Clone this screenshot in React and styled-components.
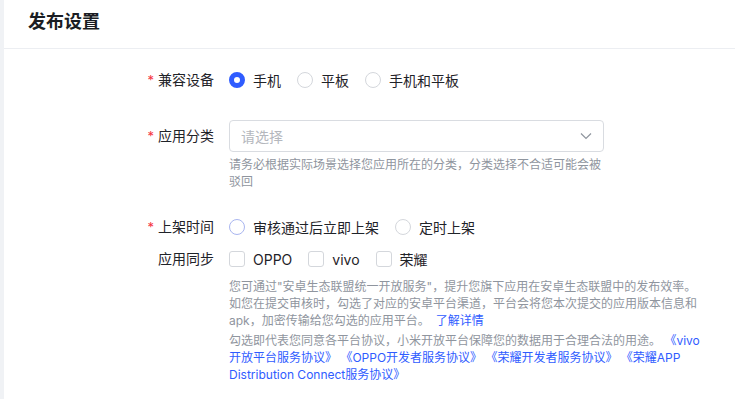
import React from "react";
import styled, { createGlobalStyle } from "styled-components";

const Global = createGlobalStyle`
  html, body { margin: 0; padding: 0; background: #f0f2f5; }
  body { font-family: Inter, "Noto Sans CJK SC", sans-serif; }
  * { box-sizing: border-box; }
`;

const Page = styled.div`
  width: 735px;
  height: 399px;
  display: flex;
  overflow: hidden;
`;

const Card = styled.div`
  margin-left: 4px;
  flex: 1;
  background: #fff;
  display: flex;
  flex-direction: column;
`;

const Header = styled.div`
  height: 49px;
  padding: 0 0 8px 24px;
  display: flex;
  align-items: center;
  border-bottom: 1px solid #eceef2;
  font-size: 18px;
  font-weight: 600;
  color: #1a1d23;
`;

const Form = styled.div`
  padding-top: 15px;
  display: flex;
  flex-direction: column;
`;

const Item = styled.div`
  display: flex;
  align-items: flex-start;
  margin-top: ${(p) => p.$mt || 0}px;
`;

const Label = styled.div`
  width: 225px;
  padding-right: 15px;
  flex-shrink: 0;
  text-align: right;
  font-size: 14px;
  line-height: 32px;
  color: #1f2329;
`;

const Star = styled.span`
  color: #f5333f;
  margin-right: 4px;
  font-size: 13px;
`;

const Control = styled.div`
  display: flex;
  flex-direction: column;
`;

const Group = styled.div`
  display: flex;
  align-items: center;
  height: 32px;
  gap: 16px;
`;

const Option = styled.label`
  display: flex;
  align-items: center;
  gap: 8px;
  font-size: 14px;
  color: #1f2329;
  cursor: pointer;
`;

const RadioDot = styled.span`
  width: 16px;
  height: 16px;
  border-radius: 50%;
  flex-shrink: 0;
  background: #fff;
  border: ${(p) =>
    p.$checked ? "5px solid #2f5cff" : p.$hover ? "1px solid #a9b6f0" : "1px solid #d4d7dc"};
`;

const CheckBox = styled.span`
  width: 16px;
  height: 16px;
  border-radius: 3px;
  flex-shrink: 0;
  border: 1px solid #d4d7dc;
  background: #fff;
`;

const Select = styled.div`
  width: 375px;
  height: 32px;
  border: 1px solid #d9dce1;
  border-radius: 4px;
  display: flex;
  align-items: center;
  justify-content: space-between;
  padding: 0 10px 0 11px;
  font-size: 14px;
  color: #b4b7bd;
`;

const Hint = styled.div`
  width: ${(p) => p.$w}px;
  margin-top: ${(p) => p.$mt || 0}px;
  font-size: 12px;
  line-height: 17px;
  color: #8f959e;
`;

const Link = styled.a`
  color: #2f5cff;
  text-decoration: none;
  margin-left: ${(p) => p.$ml || 0}px;
`;

const Radio = ({ checked, hover, children }) => (
  <Option>
    <RadioDot $checked={checked} $hover={hover} />
    {children}
  </Option>
);

const Check = ({ children }) => (
  <Option>
    <CheckBox />
    {children}
  </Option>
);

export default function App() {
  return (
    <Page>
      <Global />
      <Card>
        <Header>发布设置</Header>
        <Form>
          <Item>
            <Label>
              <Star>*</Star>兼容设备
            </Label>
            <Group>
              <Radio checked>手机</Radio>
              <Radio>平板</Radio>
              <Radio>手机和平板</Radio>
            </Group>
          </Item>
          <Item $mt={24}>
            <Label>
              <Star>*</Star>应用分类
            </Label>
            <Control>
              <Select>
                <span>请选择</span>
                <svg width="14" height="14" viewBox="0 0 14 14" fill="none">
                  <path d="M2 4.5 7 9.5 12 4.5" stroke="#8f959e" strokeWidth="1.2" />
                </svg>
              </Select>
              <Hint $w={376} $mt={4}>
                请务必根据实际场景选择您应用所在的分类，分类选择不合适可能会被驳回
              </Hint>
            </Control>
          </Item>
          <Item $mt={21}>
            <Label>
              <Star>*</Star>上架时间
            </Label>
            <Group>
              <Radio hover>审核通过后立即上架</Radio>
              <Radio>定时上架</Radio>
            </Group>
          </Item>
          <Item>
            <Label>应用同步</Label>
            <Control>
              <Group>
                <Check>OPPO</Check>
                <Check>vivo</Check>
                <Check>荣耀</Check>
              </Group>
              <Hint $w={476} $mt={3}>
                您可通过"安卓生态联盟统一开放服务"，提升您旗下应用在安卓生态联盟中的发布效率。如您在提交审核时，勾选了对应的安卓平台渠道，平台会将您本次提交的应用版本信息和apk，加密传输给您勾选的应用平台。
                <Link $ml={6}>了解详情</Link>
              </Hint>
              <Hint $w={476} $mt={3}>
                勾选即代表您同意各平台协议，小米开放平台保障您的数据用于合理合法的用途。 <Link>《vivo开放平台服务协议》</Link>{" "}
                <Link>《OPPO开发者服务协议》</Link> <Link>《荣耀开发者服务协议》</Link>{" "}
                <Link>《荣耀APP Distribution Connect服务协议》</Link>
              </Hint>
            </Control>
          </Item>
        </Form>
      </Card>
    </Page>
  );
}
